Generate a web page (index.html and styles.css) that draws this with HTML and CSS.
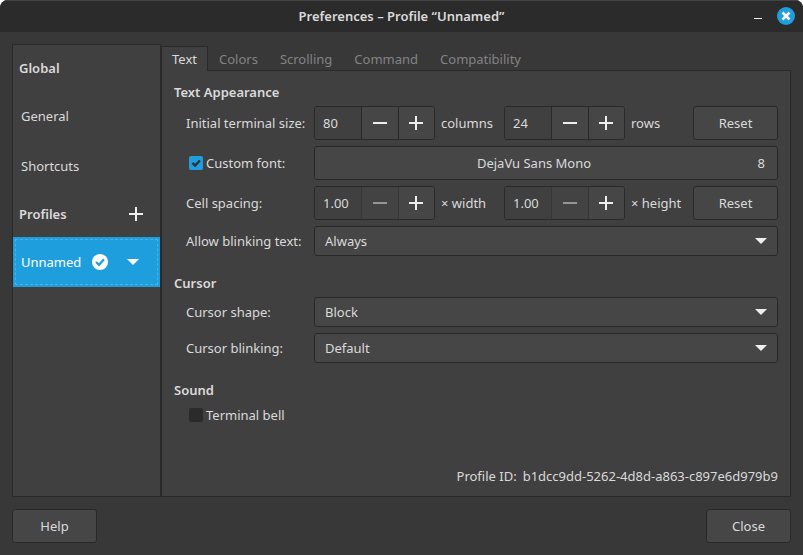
FILE: index.html
```html
<!DOCTYPE html>
<html lang="en">
<head>
<meta charset="utf-8">
<title>Preferences – Profile “Unnamed”</title>
<link rel="stylesheet" href="styles.css">
</head>
<body>
<div class="window">
  <header class="titlebar">
    <h1 class="title">Preferences – Profile “Unnamed”</h1>
    <div class="window-controls">
      <button class="window-button" type="button" aria-label="Minimize">
        <svg width="18" height="18" viewBox="0 0 18 18"><path d="M5 11.5h8" stroke="#eee" fill="none"/></svg>
      </button>
      <button class="window-button" type="button" aria-label="Close window">
        <svg width="18" height="18" viewBox="0 0 18 18"><circle cx="9" cy="9" r="9" fill="#1f9ede"/><path d="M5.5 5.5l7 7M12.5 5.5l-7 7" stroke="#fff" stroke-width="2.5" fill="none"/></svg>
      </button>
    </div>
  </header>

  <main class="content">
    <nav class="sidebar" aria-label="Sections">
      <h2 class="side-heading">Global</h2>
      <a class="side-item" href="#general">General</a>
      <a class="side-item" href="#shortcuts">Shortcuts</a>
      <div class="side-heading">
        <h2 class="heading">Profiles</h2>
        <button class="icon-button" type="button" aria-label="Add profile">
          <svg width="14" height="14" viewBox="0 0 14 14"><path d="M0 7h14M7 0v14" stroke="#eee" stroke-width="2"/></svg>
        </button>
      </div>
      <div class="side-item selected">
        <a class="side-link" href="#unnamed">Unnamed</a>
        <svg width="16" height="16" viewBox="0 0 16 16"><circle cx="8" cy="8" r="8" fill="#fff"/><path d="M4.1 8l2.9 2.8 5-5.6" stroke="#1f9ede" stroke-width="2.2" fill="none"/></svg>
        <button class="icon-button menu-button" type="button" aria-label="Profile menu">
          <svg width="12" height="6" viewBox="0 0 12 6"><path d="M0 0h12L6 6z" fill="#fff"/></svg>
        </button>
      </div>
    </nav>

    <section class="notebook">
      <div class="tabs" role="tablist">
        <button class="tab active" type="button" role="tab" aria-selected="true">Text</button>
        <button class="tab" type="button" role="tab">Colors</button>
        <button class="tab" type="button" role="tab">Scrolling</button>
        <button class="tab" type="button" role="tab">Command</button>
        <button class="tab" type="button" role="tab">Compatibility</button>
      </div>

      <div class="page">
        <section class="group">
          <h2 class="heading">Text Appearance</h2>
          <div class="settings">
            <label for="columns">Initial terminal size:</label>
            <div class="size-row">
              <div class="spin">
                <input id="columns" class="spin-entry" type="text" value="80">
                <button class="spin-button" type="button" aria-label="Fewer columns"><svg width="14" height="14" viewBox="0 0 14 14"><path d="M0 7h14" stroke="#eee" stroke-width="2"/></svg></button>
                <button class="spin-button" type="button" aria-label="More columns"><svg width="14" height="14" viewBox="0 0 14 14"><path d="M0 7h14M7 0v14" stroke="#eee" stroke-width="2"/></svg></button>
              </div>
              <label for="columns">columns</label>
              <div class="spin">
                <input id="rows" class="spin-entry" type="text" value="24">
                <button class="spin-button" type="button" aria-label="Fewer rows"><svg width="14" height="14" viewBox="0 0 14 14"><path d="M0 7h14" stroke="#eee" stroke-width="2"/></svg></button>
                <button class="spin-button" type="button" aria-label="More rows"><svg width="14" height="14" viewBox="0 0 14 14"><path d="M0 7h14M7 0v14" stroke="#eee" stroke-width="2"/></svg></button>
              </div>
              <label for="rows">rows</label>
              <button class="button" type="button">Reset</button>
            </div>

            <label class="check-row"><input class="check" type="checkbox" checked><svg class="check-mark" width="14" height="14" viewBox="0 0 14 14"><path d="M3.4 6.8l2.7 2.7 4.8-5" stroke="#26323c" stroke-width="2.4" fill="none"/></svg>Custom font:</label>
            <button class="button font-button" type="button"><span class="font-name">DejaVu Sans Mono</span><span class="font-size">8</span></button>

            <label for="cell-width">Cell spacing:</label>
            <div class="size-row">
              <div class="spin">
                <input id="cell-width" class="spin-entry" type="text" value="1.00">
                <button class="spin-button" type="button" disabled aria-label="Decrease width"><svg width="14" height="14" viewBox="0 0 14 14"><path d="M0 7h14" stroke="#959595" stroke-width="2"/></svg></button>
                <button class="spin-button" type="button" aria-label="Increase width"><svg width="14" height="14" viewBox="0 0 14 14"><path d="M0 7h14M7 0v14" stroke="#eee" stroke-width="2"/></svg></button>
              </div>
              <label for="cell-width">× width</label>
              <div class="spin">
                <input id="cell-height" class="spin-entry" type="text" value="1.00">
                <button class="spin-button" type="button" disabled aria-label="Decrease height"><svg width="14" height="14" viewBox="0 0 14 14"><path d="M0 7h14" stroke="#959595" stroke-width="2"/></svg></button>
                <button class="spin-button" type="button" aria-label="Increase height"><svg width="14" height="14" viewBox="0 0 14 14"><path d="M0 7h14M7 0v14" stroke="#eee" stroke-width="2"/></svg></button>
              </div>
              <label for="cell-height">× height</label>
              <button class="button" type="button">Reset</button>
            </div>

            <label for="blinking-text">Allow blinking text:</label>
            <div class="combo">
              <select id="blinking-text" class="combo-select"><option>Always</option></select>
              <svg class="combo-arrow" width="12" height="6" viewBox="0 0 12 6"><path d="M0 0h12L6 6z" fill="#eee"/></svg>
            </div>
          </div>
        </section>

        <section class="group">
          <h2 class="heading">Cursor</h2>
          <div class="settings">
            <label for="cursor-shape">Cursor shape:</label>
            <div class="combo">
              <select id="cursor-shape" class="combo-select"><option>Block</option></select>
              <svg class="combo-arrow" width="12" height="6" viewBox="0 0 12 6"><path d="M0 0h12L6 6z" fill="#eee"/></svg>
            </div>
            <label for="cursor-blinking">Cursor blinking:</label>
            <div class="combo">
              <select id="cursor-blinking" class="combo-select"><option>Default</option></select>
              <svg class="combo-arrow" width="12" height="6" viewBox="0 0 12 6"><path d="M0 0h12L6 6z" fill="#eee"/></svg>
            </div>
          </div>
        </section>

        <section class="group">
          <h2 class="heading">Sound</h2>
          <div class="settings">
            <label class="check-row"><input class="check" type="checkbox">Terminal bell</label>
          </div>
        </section>

        <p class="profile-id"><span>Profile ID:</span><span>b1dcc9dd-5262-4d8d-a863-c897e6d979b9</span></p>
      </div>
    </section>
  </main>

  <footer class="actions">
    <button class="button" type="button">Help</button>
    <button class="button" type="button">Close</button>
  </footer>
</div>
</body>
</html>
```

FILE: styles.css
```css
:root {
  --window: #383838;
  --panel: #404040;
  --control: #464646;
  --line: #292929;
  --text: #dadada;
  --accent: #1f9ede;
}

* {
  box-sizing: border-box;
}

html {
  background: #fff;
}

body {
  margin: 0;
  color: var(--text);
  font: 13px/18px "Noto Sans", sans-serif;
}

button,
input,
select {
  margin: 0;
  color: inherit;
  font: inherit;
}

svg {
  display: block;
  flex: none;
}

h1,
h2,
p {
  margin: 0;
}

.window {
  display: flex;
  flex-direction: column;
  min-height: 100vh;
  overflow: hidden;
  background: var(--window);
  border-radius: 8px 8px 0 0;
}

.titlebar {
  display: grid;
  grid-template-columns: 1fr auto 1fr;
  align-items: center;
  height: 32px;
  padding: 0 8px 1px;
  background: #2b2b2b;
  border-top: 1px solid #434343;
}

.title {
  grid-column: 2;
  font-size: 13px;
  font-weight: 600;
}

.window-controls {
  display: flex;
  justify-content: flex-end;
  gap: 10px;
}

.window-button,
.icon-button {
  padding: 0;
  background: none;
  border: 0;
}

.content {
  display: flex;
  flex: 1;
  padding: 12px 12px 0;
}

.sidebar {
  width: 149px;
  background: var(--panel);
  border: 1px solid var(--line);
}

.heading,
.side-heading {
  font-size: 13px;
  font-weight: 600;
}

.side-heading {
  display: flex;
  align-items: center;
  justify-content: space-between;
  height: 46px;
  padding: 0 17px 0 6px;
}

.side-item {
  display: flex;
  align-items: center;
  height: 50px;
  padding: 0 8px;
  color: inherit;
  text-decoration: none;
}

.side-link {
  width: 71px;
  color: inherit;
  text-decoration: none;
}

.selected {
  color: #fff;
  background: var(--accent);
  outline: 1px dashed #4bb1e4;
  outline-offset: -3px;
}

.menu-button {
  margin-left: 19px;
}

.notebook {
  display: flex;
  flex: 1;
  flex-direction: column;
  padding-top: 2px;
}

.tabs {
  display: flex;
}

.tab {
  height: 24px;
  padding: 0 10px;
  color: #838383;
  background: none;
  border: 1px solid transparent;
  border-bottom: 0;
}

.tab.active {
  position: relative;
  height: 25px;
  margin-bottom: -1px;
  color: var(--text);
  background: var(--panel);
  border-color: var(--line);
}

.page {
  display: flex;
  flex: 1;
  flex-direction: column;
  gap: 18px;
  padding: 12px 12px 11px;
  background: var(--panel);
  border: 1px solid var(--line);
}

.group {
  display: flex;
  flex-direction: column;
  gap: 5px;
}

.settings {
  display: grid;
  grid-template-columns: 122px 1fr;
  align-items: center;
  gap: 6px;
  padding-left: 12px;
}

.size-row {
  display: grid;
  grid-template-columns: 121px 57px 121px 1fr 85px;
  align-items: center;
  gap: 6px;
}

.spin {
  display: flex;
  height: 34px;
  overflow: hidden;
  border: 1px solid var(--line);
  border-radius: 3px;
}

.spin-entry {
  width: 46px;
  padding: 0 8px;
  background: var(--panel);
  border: 0;
}

.spin-button {
  display: flex;
  flex: 1;
  align-items: center;
  justify-content: center;
  padding: 0;
  background: var(--control);
  border: 0;
  border-left: 1px solid var(--line);
}

.spin-button:disabled,
.spin-button:disabled + .spin-button {
  border-left-color: #363636;
}

.spin-button:disabled {
  background: #434343;
}

.button {
  height: 34px;
  min-width: 85px;
  padding: 0 12px;
  background: var(--control);
  border: 1px solid var(--line);
  border-radius: 3px;
}

.font-button {
  display: flex;
  align-items: center;
}

.font-name {
  flex: 1;
  text-align: center;
}

.font-size {
  width: 24px;
  text-align: right;
}

.check-row {
  display: grid;
  grid-template-columns: 14px auto;
  align-items: center;
  gap: 3px;
  min-height: 22px;
  padding-left: 3px;
}

.check {
  grid-area: 1 / 1;
  width: 14px;
  height: 14px;
  appearance: none;
  background: #2b2b2b;
  border-radius: 2px;
}

.check:checked {
  background: var(--accent);
}

.check-mark {
  grid-area: 1 / 1;
  pointer-events: none;
}

.combo {
  display: grid;
  align-items: center;
}

.combo-select {
  grid-area: 1 / 1;
  width: 100%;
  height: 30px;
  padding: 0 10px;
  appearance: none;
  background: var(--control);
  border: 1px solid var(--line);
  border-radius: 3px;
}

.combo-arrow {
  grid-area: 1 / 1;
  justify-self: end;
  margin-right: 11px;
  pointer-events: none;
}

.profile-id {
  display: flex;
  justify-content: flex-end;
  gap: 6px;
  margin-top: auto;
}

.actions {
  display: flex;
  justify-content: space-between;
  padding: 12px;
}
```
